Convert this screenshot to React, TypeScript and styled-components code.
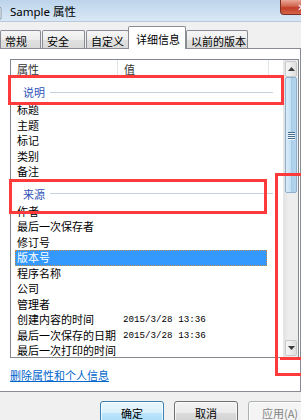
import React from 'react'
import styled, { createGlobalStyle } from 'styled-components'

const cjk = `"Noto Sans CJK SC", "Noto Sans", sans-serif`

const GlobalStyle = createGlobalStyle`
  html, body { margin: 0; padding: 0; background: #f0f0f0; }
  body { font-family: ${cjk}; }
  * { box-sizing: border-box; }
`

type Item =
  | { kind: 'group'; label: string }
  | { kind: 'row'; label: string; value?: string; selected?: boolean }

const items: Item[] = [
  { kind: 'group', label: '说明' },
  { kind: 'row', label: '标题' },
  { kind: 'row', label: '主题' },
  { kind: 'row', label: '标记' },
  { kind: 'row', label: '类别' },
  { kind: 'row', label: '备注' },
  { kind: 'group', label: '来源' },
  { kind: 'row', label: '作者' },
  { kind: 'row', label: '最后一次保存者' },
  { kind: 'row', label: '修订号' },
  { kind: 'row', label: '版本号', selected: true },
  { kind: 'row', label: '程序名称' },
  { kind: 'row', label: '公司' },
  { kind: 'row', label: '管理者' },
  { kind: 'row', label: '创建内容的时间', value: '2015/3/28 13:36' },
  { kind: 'row', label: '最后一次保存的日期', value: '2015/3/28 13:36' },
  { kind: 'row', label: '最后一次打印的时间' },
]

const tabs = [
  { label: '常规', w: 41, ml: 0 },
  { label: '安全', w: 43, ml: 1 },
  { label: '自定义', w: 43, ml: 1 },
  { label: '详细信息', w: 58, ml: -1, active: true },
  { label: '以前的版本', w: 62, ml: 0 },
]

export default function App() {
  return (
    <Root>
      <GlobalStyle />
      <TitleBar>
        <AppIcon width="16" height="16" viewBox="0 0 16 16">
          <path d="M3 1h7l3 3v11H3z" fill="#fbfbfb" stroke="#8d99a6" />
          <path d="M5 6h6M5 8h6M5 10h6M5 12h4" stroke="#b5c0cc" />
        </AppIcon>
        <Title>Sample 属性</Title>
        <CloseBtn>✕</CloseBtn>
      </TitleBar>

      <TabStrip>
        {tabs.map((t) => (
          <Tab key={t.label} $w={t.w} $ml={t.ml} $active={t.active}>
            {t.label}
          </Tab>
        ))}
      </TabStrip>

      <TabPage>
        <ListBox>
          <ListMain>
            <Header>
              <HeaderCell $w={107}>属性</HeaderCell>
              <HeaderCell $w={151}>值</HeaderCell>
              <HeaderFiller />
            </Header>
            {items.map((it, i) =>
              it.kind === 'group' ? (
                <Group key={i}>
                  <span>{it.label}</span>
                  <GroupLine />
                </Group>
              ) : (
                <Row key={i} $selected={it.selected}>
                  <Label>{it.label}</Label>
                  {it.value && <Value>{it.value}</Value>}
                </Row>
              )
            )}
          </ListMain>
          <ScrollBar>
            <ScrollButton>
              <svg width="7" height="4" viewBox="0 0 7 4">
                <path d="M0 4L3.5 0L7 4z" fill="#3c3c3c" />
              </svg>
            </ScrollButton>
            <Thumb>
              <Grip />
              <Grip />
              <Grip />
              <Grip />
            </Thumb>
            <Track />
            <ScrollButton>
              <svg width="7" height="4" viewBox="0 0 7 4">
                <path d="M0 0L3.5 4L7 0z" fill="#3c3c3c" />
              </svg>
            </ScrollButton>
          </ScrollBar>
        </ListBox>
        <Link>删除属性和个人信息</Link>
      </TabPage>

      <Footer>
        <Button $default>确定</Button>
        <Button>取消</Button>
        <Button $disabled>应用(A)</Button>
      </Footer>

      <RedBox $x={8} $y={75} $w={276} $h={30} />
      <RedBox $x={9} $y={179} $w={258} $h={35} />
      <RedBox $x={275} $y={173} $w={40} $h={203} />
      <RedBar $x={280} $y={357} $w={30} />
    </Root>
  )
}

const Root = styled.div`
  position: relative;
  width: 301px;
  height: 420px;
  overflow: hidden;
  background: #f0f0f0;
`

const TitleBar = styled.div`
  height: 22px;
  display: flex;
  align-items: center;
  background: linear-gradient(180deg, #bcd3ea 0%, #cadef1 45%, #d8e7f5 100%);
  border-bottom: 1px solid #b9c9da;
`

const AppIcon = styled.svg`
  margin-left: -12px;
  margin-top: 2px;
  flex-shrink: 0;
`

const Title = styled.div`
  margin-left: 6px;
  padding-top: 1px;
  font-family: "Noto Sans", ${cjk};
  font-size: 11.5px;
  color: #000;
`

const CloseBtn = styled.div`
  margin-left: auto;
  margin-right: -22px;
  align-self: flex-start;
  flex-shrink: 0;
  width: 43px;
  height: 15px;
  border: 1px solid #7a2f22;
  border-top: none;
  border-radius: 0 0 4px 4px;
  background: linear-gradient(180deg, #e9a898 0%, #d0624c 45%, #c13d27 55%, #d5654a 100%);
  color: #fff;
  font-family: "DejaVu Sans", sans-serif;
  font-size: 10px;
  font-weight: bold;
  display: flex;
  align-items: center;
  justify-content: center;
`

const TabStrip = styled.div`
  height: 26px;
  display: flex;
  align-items: flex-end;
`

const Tab = styled.div<{ $w: number; $ml: number; $active?: boolean }>`
  position: relative;
  z-index: ${(p) => (p.$active ? 1 : 0)};
  flex-shrink: 0;
  width: ${(p) => p.$w}px;
  margin-left: ${(p) => p.$ml}px;
  height: ${(p) => (p.$active ? 23 : 18)}px;
  margin-bottom: ${(p) => (p.$active ? -1 : 0)}px;
  padding: ${(p) => (p.$active ? '1px 0 0 7px' : '2px 0 0 4px')};
  border: 1px solid #898c95;
  border-bottom: none;
  border-radius: 2px 2px 0 0;
  background: ${(p) =>
    p.$active ? '#fff' : 'linear-gradient(180deg, #f6f6f6 0%, #ececec 50%, #e0e0e0 51%, #d9d9d9 100%)'};
  display: flex;
  align-items: center;
  font-size: 11px;
  line-height: 14px;
  color: #000;
  white-space: nowrap;
`

const TabPage = styled.div`
  height: 344px;
  background: #fff;
  border-top: 1px solid #898c95;
  border-right: 1px solid #898c95;
  border-bottom: 1px solid #898c95;
  padding: 10px 0 0 10px;
`

const ListBox = styled.div`
  width: 289px;
  height: 299px;
  border: 1px solid #828790;
  display: flex;
  background: #fff;
`

const ListMain = styled.div`
  flex: 1;
  display: flex;
  flex-direction: column;
  overflow: hidden;
`

const Header = styled.div`
  height: 18px;
  flex-shrink: 0;
  display: flex;
  background: linear-gradient(180deg, #ffffff 0%, #ffffff 60%, #f7f8fa 100%);
`

const HeaderCell = styled.div<{ $w: number }>`
  width: ${(p) => p.$w}px;
  flex-shrink: 0;
  padding-left: 6px;
  border-right: 1px solid #e3e5e8;
  display: flex;
  align-items: center;
  font-size: 11px;
  color: #333;
`

const HeaderFiller = styled.div`
  flex: 1;
`

const Group = styled.div`
  height: 24px;
  flex-shrink: 0;
  padding: 4px 10px 0 12px;
  display: flex;
  align-items: center;
  gap: 5px;
  font-size: 11px;
  color: #2f52b8;
`

const GroupLine = styled.div`
  flex: 1;
  height: 1px;
  background: #c7d1e4;
`

const Row = styled.div<{ $selected?: boolean }>`
  height: 15.5px;
  flex-shrink: 0;
  width: 252px;
  margin-left: 4px;
  padding-left: 2px;
  display: flex;
  align-items: center;
  font-size: 11px;
  line-height: 15px;
  white-space: nowrap;
  color: ${(p) => (p.$selected ? '#fff' : '#000')};
  background: ${(p) => (p.$selected ? '#3399ff' : 'transparent')};
  outline: ${(p) => (p.$selected ? '1px dotted #c58a4e' : 'none')};
  outline-offset: -1px;
`

const Label = styled.div`
  width: 106px;
  flex-shrink: 0;
`

const Value = styled.div`
  font-family: "Liberation Mono", monospace;
  font-size: 9.2px;
`

const ScrollBar = styled.div`
  width: 15px;
  flex-shrink: 0;
  display: flex;
  flex-direction: column;
  background: linear-gradient(90deg, #e3e3e3 0%, #ededed 30%, #ededed 100%);
  border-left: 1px solid #e6e6e6;
`

const ScrollButton = styled.div`
  height: 16px;
  flex-shrink: 0;
  margin: 1px 1px 0;
  border: 1px solid #c9c9c9;
  border-radius: 2px;
  background: linear-gradient(90deg, #f6f6f6 0%, #ebebeb 50%, #dedede 100%);
  display: flex;
  align-items: center;
  justify-content: center;
  &:last-child {
    margin: 0 1px 1px;
  }
`

const Thumb = styled.div`
  height: 116px;
  flex-shrink: 0;
  margin: 0 1px;
  border: 1px solid #8eb0cc;
  border-radius: 2px;
  background: linear-gradient(90deg, #dcedf9 0%, #c4e0f4 45%, #a9cde9 55%, #b6d6ee 100%);
  display: flex;
  flex-direction: column;
  align-items: center;
  justify-content: center;
  gap: 1px;
`

const Grip = styled.div`
  width: 7px;
  height: 1px;
  background: #4a6d8c;
  box-shadow: 0 1px 0 #eef6fc;
`

const Track = styled.div`
  flex: 1;
`

const Link = styled.div`
  margin-top: 10px;
  font-size: 11px;
  line-height: 14px;
  color: #0066cc;
  text-decoration: underline;
`

const Footer = styled.div`
  display: flex;
  gap: 10px;
  padding: 9px 0 0 100px;
`

const Button = styled.div<{ $default?: boolean; $disabled?: boolean }>`
  width: 64px;
  height: 23px;
  flex-shrink: 0;
  border: 1px solid ${(p) => (p.$default ? '#3c7fb1' : p.$disabled ? '#adb2b5' : '#707070')};
  border-radius: 3px;
  background: ${(p) =>
    p.$disabled
      ? '#f4f4f4'
      : p.$default
      ? 'linear-gradient(180deg, #eaf6fd 0%, #d9f0fc 50%, #bee6fd 51%, #a7d9f5 100%)'
      : 'linear-gradient(180deg, #f2f2f2 0%, #ebebeb 50%, #dddddd 51%, #cfcfcf 100%)'};
  box-shadow: inset 0 0 0 1px rgba(255, 255, 255, 0.7);
  display: flex;
  align-items: center;
  justify-content: center;
  font-size: 11px;
  color: ${(p) => (p.$disabled ? '#838383' : '#000')};
`

const RedBox = styled.div<{ $x: number; $y: number; $w: number; $h: number }>`
  position: absolute;
  left: ${(p) => p.$x}px;
  top: ${(p) => p.$y}px;
  width: ${(p) => p.$w}px;
  height: ${(p) => p.$h}px;
  border: 3px solid #ff3a3a;
  pointer-events: none;
`

const RedBar = styled.div<{ $x: number; $y: number; $w: number }>`
  position: absolute;
  left: ${(p) => p.$x}px;
  top: ${(p) => p.$y}px;
  width: ${(p) => p.$w}px;
  height: 3px;
  background: #ff3a3a;
`
